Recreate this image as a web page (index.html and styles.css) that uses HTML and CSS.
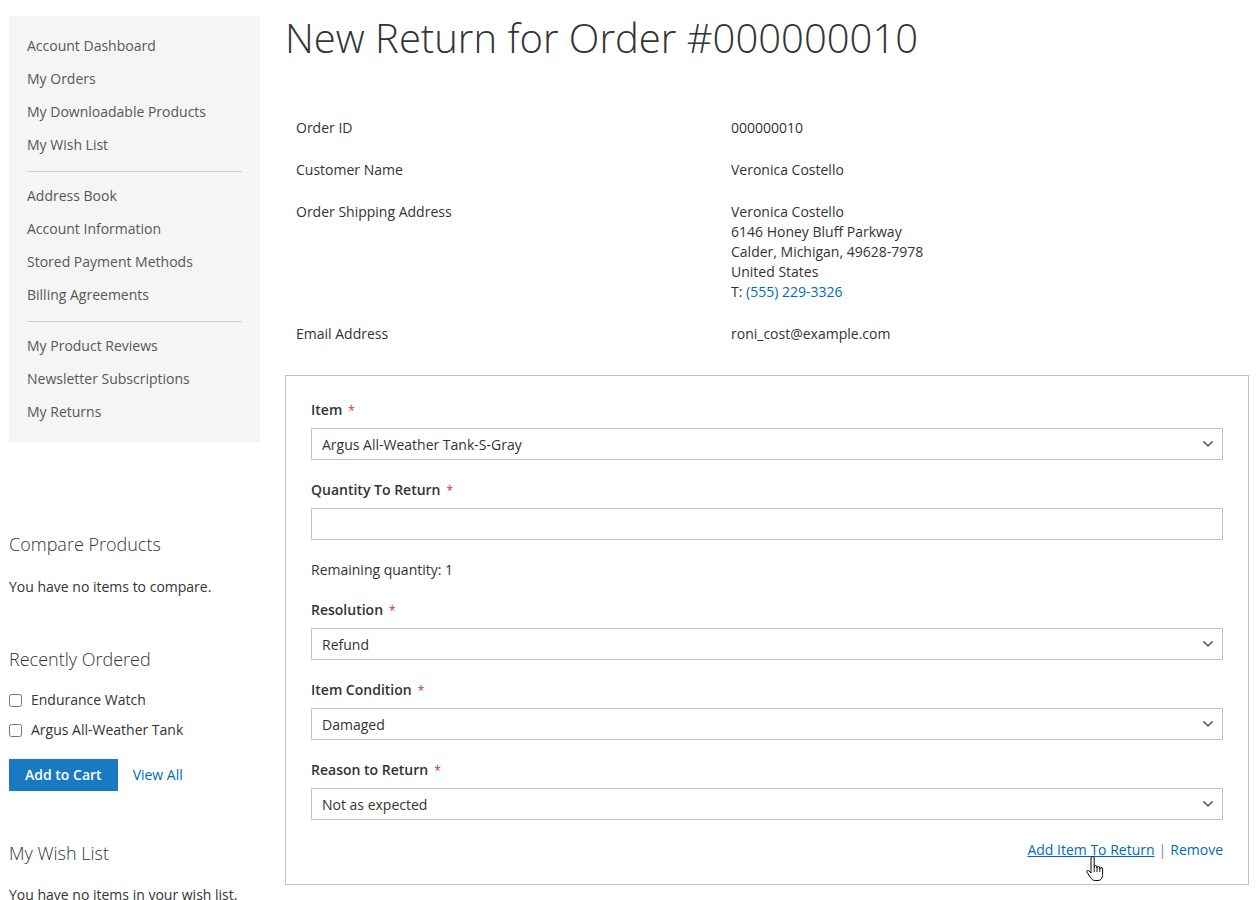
FILE: index.html
```html
<!DOCTYPE html>
<html lang="en">
<head>
<meta charset="utf-8">
<title>New Return for Order #000000010</title>
<link rel="stylesheet" href="styles.css">
</head>
<body>
<div class="page">
  <aside class="sidebar">
    <nav class="account-nav">
      <ul class="nav-list">
        <li><a href="#">Account Dashboard</a></li>
        <li><a href="#">My Orders</a></li>
        <li><a href="#">My Downloadable Products</a></li>
        <li><a href="#">My Wish List</a></li>
        <li class="delimiter"></li>
        <li><a href="#">Address Book</a></li>
        <li><a href="#">Account Information</a></li>
        <li><a href="#">Stored Payment Methods</a></li>
        <li><a href="#">Billing Agreements</a></li>
        <li class="delimiter"></li>
        <li><a href="#">My Product Reviews</a></li>
        <li><a href="#">Newsletter Subscriptions</a></li>
        <li><a href="#">My Returns</a></li>
      </ul>
    </nav>

    <section class="block block-compare">
      <h2 class="block-title">Compare Products</h2>
      <p class="block-text">You have no items to compare.</p>
    </section>

    <section class="block block-reorder">
      <h2 class="block-title">Recently Ordered</h2>
      <ul class="reorder-list">
        <li><label class="check"><input type="checkbox"><span>Endurance Watch</span></label></li>
        <li><label class="check"><input type="checkbox"><span>Argus All-Weather Tank</span></label></li>
      </ul>
      <div class="reorder-actions">
        <button class="btn-primary" type="button">Add to Cart</button>
        <a class="link" href="#">View All</a>
      </div>
    </section>

    <section class="block block-wishlist">
      <h2 class="block-title">My Wish List</h2>
      <p class="block-text">You have no items in your wish list.</p>
    </section>
  </aside>

  <main class="main">
    <h1 class="page-title">New Return for Order #000000010</h1>

    <div class="info">
      <div class="info-label">Order ID</div>
      <div class="info-value">000000010</div>
      <div class="info-label">Customer Name</div>
      <div class="info-value">Veronica Costello</div>
      <div class="info-label">Order Shipping Address</div>
      <div class="info-value">Veronica Costello<br>6146 Honey Bluff Parkway<br>Calder, Michigan, 49628-7978<br>United States<br>T: <a class="link" href="#">(555) 229-3326</a></div>
      <div class="info-label">Email Address</div>
      <div class="info-value">roni_cost@example.com</div>
    </div>

    <form class="return-box">
      <div class="field">
        <label class="field-label">Item<span class="req">*</span></label>
        <div class="select-wrap">
          <select class="control"><option>Argus All-Weather Tank-S-Gray</option></select>
          <svg class="chev" width="10" height="6" viewBox="0 0 10 6"><path d="M0.5 0.5 L5 5 L9.5 0.5" fill="none" stroke="#333" stroke-width="1.2"/></svg>
        </div>
      </div>
      <div class="field">
        <label class="field-label">Quantity To Return<span class="req">*</span></label>
        <input class="control" type="text">
        <div class="note">Remaining quantity: 1</div>
      </div>
      <div class="field">
        <label class="field-label">Resolution<span class="req">*</span></label>
        <div class="select-wrap">
          <select class="control"><option>Refund</option></select>
          <svg class="chev" width="10" height="6" viewBox="0 0 10 6"><path d="M0.5 0.5 L5 5 L9.5 0.5" fill="none" stroke="#333" stroke-width="1.2"/></svg>
        </div>
      </div>
      <div class="field">
        <label class="field-label">Item Condition<span class="req">*</span></label>
        <div class="select-wrap">
          <select class="control"><option>Damaged</option></select>
          <svg class="chev" width="10" height="6" viewBox="0 0 10 6"><path d="M0.5 0.5 L5 5 L9.5 0.5" fill="none" stroke="#333" stroke-width="1.2"/></svg>
        </div>
      </div>
      <div class="field">
        <label class="field-label">Reason to Return<span class="req">*</span></label>
        <div class="select-wrap">
          <select class="control"><option>Not as expected</option></select>
          <svg class="chev" width="10" height="6" viewBox="0 0 10 6"><path d="M0.5 0.5 L5 5 L9.5 0.5" fill="none" stroke="#333" stroke-width="1.2"/></svg>
        </div>
      </div>
      <div class="item-actions">
        <a class="link add-item" href="#">Add Item To Return</a><span class="sep">|</span><a class="link" href="#">Remove</a>
        <svg class="cursor" width="19" height="26" viewBox="0 0 19 26"><path d="M6 2.2 a1.6 1.6 0 0 1 3.2 0 V11 a1.4 1.4 0 0 1 2.8 0 V12 a1.4 1.4 0 0 1 2.8 0 V13 a1.4 1.4 0 0 1 2.8 0 V18.5 c0 3.5 -1.8 6 -4.6 6 H10.2 c-2.2 0 -3.4 -1 -4.8 -3.2 L2 16.3 c-0.8 -1.2 0.6 -2.6 1.8 -1.6 L6 17 Z" fill="#fff" stroke="#000" stroke-width="1" stroke-linejoin="round"/><path d="M9.2 11 V16 M12 12 V16 M14.8 13 V16" stroke="#000" stroke-width="0.9"/></svg>
      </div>
    </form>
  </main>
</div>
</body>
</html>
```

FILE: styles.css
```css
* {
  box-sizing: border-box;
}

body {
  margin: 0;
  font-family: "Open Sans", "Liberation Sans", Arial, sans-serif;
  font-size: 14px;
  line-height: 20px;
  color: #333;
  background: #fff;
}

.page {
  display: flex;
  gap: 25px;
  padding: 16px 9px 0;
}

/* Sidebar */
.sidebar {
  flex: 0 0 251px;
  width: 251px;
}

.account-nav {
  background: #f5f5f5;
  padding: 15px 0 15px;
}

.nav-list {
  list-style: none;
  margin: 0;
  padding: 0;
  display: flex;
  flex-direction: column;
}

.nav-list li {
  margin-bottom: 3px;
}

.nav-list li:last-child {
  margin-bottom: 0;
}

.nav-list a {
  display: block;
  padding: 5px 18px;
  color: #575757;
  text-decoration: none;
}

.nav-list .delimiter {
  border-top: 1px solid #d1d1d1;
  margin: 8px 18px 9px;
}

.block-title {
  margin: 0 0 21px;
  font-size: 18px;
  line-height: 24px;
  font-weight: 300;
  color: #333;
}

.block-text {
  margin: 0;
}

.block-compare {
  margin-top: 90px;
}

.block-reorder {
  margin-top: 50px;
}

.block-reorder .block-title {
  margin-bottom: 19px;
}

.block-wishlist {
  margin-top: 50px;
}

.block-wishlist .block-title {
  margin-bottom: 20px;
}

.reorder-list {
  list-style: none;
  margin: 0;
  padding: 0;
}

.reorder-list li {
  margin-bottom: 10px;
}

.reorder-list li:last-child {
  margin-bottom: 0;
}

.check {
  display: flex;
  align-items: center;
}

.check input {
  width: 13px;
  height: 13px;
  margin: 0 9px 0 0;
}

.reorder-actions {
  display: flex;
  align-items: center;
  gap: 15px;
  margin-top: 19px;
}

.btn-primary {
  font-family: inherit;
  font-size: 14px;
  font-weight: 600;
  line-height: 18px;
  color: #fff;
  background: #1979c3;
  border: 1px solid #1979c3;
  padding: 6px 15px;
  border-radius: 0;
  cursor: pointer;
}

.link {
  color: #006bb4;
  text-decoration: none;
}

/* Main */
.main {
  flex: 1 1 auto;
  min-width: 0;
}

.page-title {
  margin: 0;
  padding-top: 2px;
  font-size: 40px;
  line-height: 40px;
  font-weight: 300;
  color: #333;
}

.info {
  display: grid;
  grid-template-columns: 436px 1fr;
  margin-top: 49px;
}

.info-label,
.info-value {
  padding: 11px 10px;
}

.info-label {
  padding-left: 11px;
}

.return-box {
  margin: 20px 0 0;
  border: 1px solid #c2c2c2;
  padding: 24px 25px 24px 25px;
  position: relative;
}

.field {
  margin-bottom: 20px;
}

.field-label {
  display: block;
  font-weight: 600;
  line-height: 20px;
  height: 20px;
  margin-bottom: 8px;
}

.req {
  color: #e02b27;
  font-size: 12px;
  line-height: 1;
  margin-left: 6px;
  font-weight: 400;
}

.select-wrap {
  position: relative;
}

.control {
  display: block;
  width: 100%;
  height: 32px;
  border: 1px solid #c2c2c2;
  border-radius: 1px;
  background: #fff;
  padding: 0 10px;
  font-family: inherit;
  font-size: 14px;
  color: #333;
  -webkit-appearance: none;
  appearance: none;
  outline: none;
}

.chev {
  position: absolute;
  right: 10px;
  top: 13px;
  pointer-events: none;
}

.note {
  margin-top: 20px;
}

.item-actions {
  text-align: right;
  position: relative;
  height: 20px;
}

.add-item {
  text-decoration: underline;
}

.sep {
  color: #6d8fb5;
  margin: 0 4px 0 4px;
}

.cursor {
  position: absolute;
  left: 774px;
  top: 16px;
}
```
